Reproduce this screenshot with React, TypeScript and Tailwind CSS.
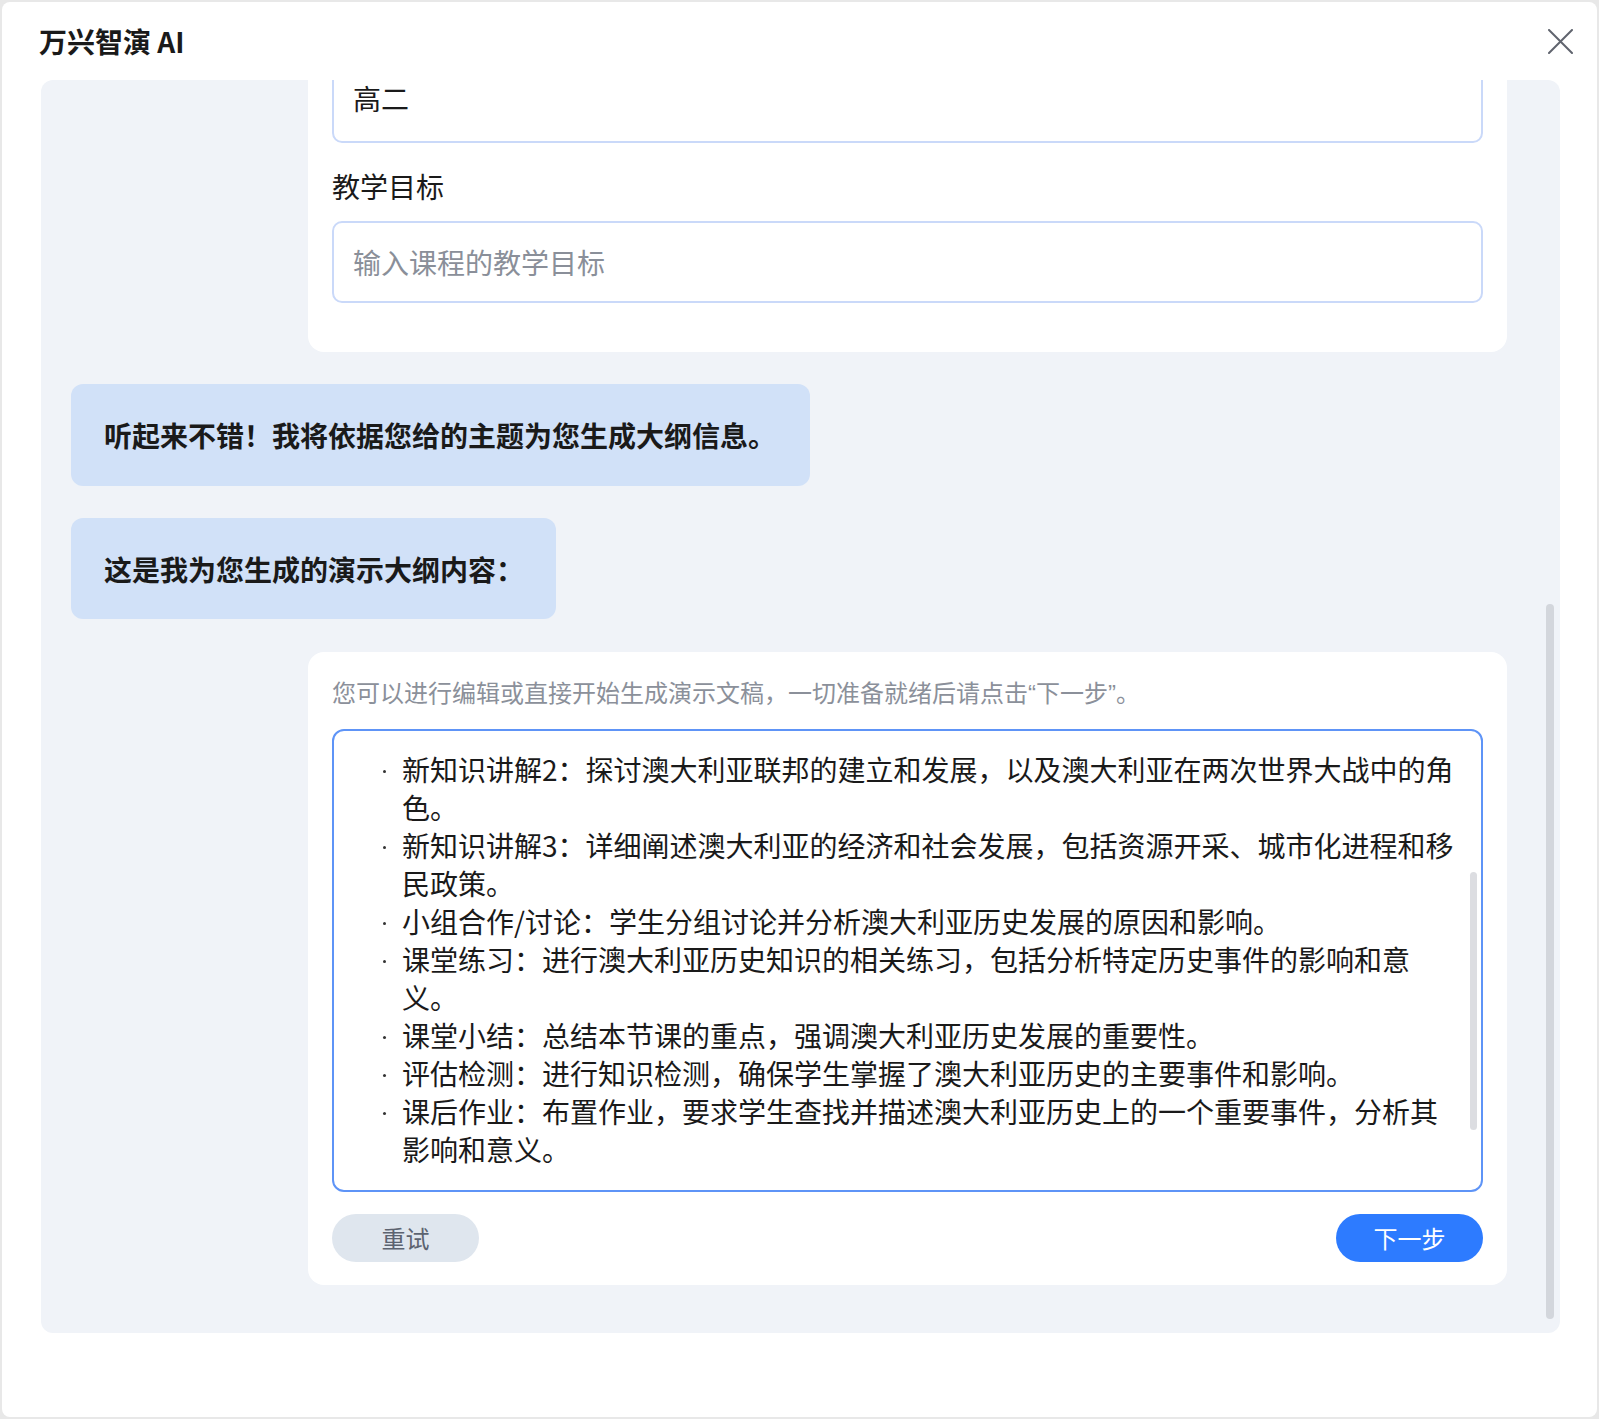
import React from "react";

const items = [
  "新知识讲解2：探讨澳大利亚联邦的建立和发展，以及澳大利亚在两次世界大战中的角色。",
  "新知识讲解3：详细阐述澳大利亚的经济和社会发展，包括资源开采、城市化进程和移民政策。",
  "小组合作/讨论：学生分组讨论并分析澳大利亚历史发展的原因和影响。",
  "课堂练习：进行澳大利亚历史知识的相关练习，包括分析特定历史事件的影响和意义。",
  "课堂小结：总结本节课的重点，强调澳大利亚历史发展的重要性。",
  "评估检测：进行知识检测，确保学生掌握了澳大利亚历史的主要事件和影响。",
  "课后作业：布置作业，要求学生查找并描述澳大利亚历史上的一个重要事件，分析其影响和意义。",
];

export default function App() {
  return (
    <div className="w-[1599px] h-[1419px] bg-[#e8e8e8] p-[2px] font-['Noto_Sans_CJK_SC',sans-serif] text-[#1a1a1a]">
      <div className="w-full h-full bg-white rounded-[8px] flex flex-col overflow-hidden">
        {/* Header */}
        <div className="h-[78px] shrink-0 flex items-center justify-between pl-[37px] pr-[24px]">
          <div className="text-[28px] font-bold leading-[38px] text-[#1a1a1a]">万兴智演 AI</div>
          <svg width="25" height="25" viewBox="0 0 25 25" fill="none">
            <path d="M1 1L24 24M24 1L1 24" stroke="#60646e" strokeWidth="2" strokeLinecap="round" />
          </svg>
        </div>

        {/* Panel */}
        <div className="relative ml-[39px] w-[1519px] h-[1253px] bg-[#f0f3f8] rounded-[12px] overflow-hidden">
          <div className="flex flex-col items-start pl-[30px]">
            {/* Card 1 (scrolled, top cut) */}
            <div className="ml-[237px] -mt-[19px] w-[1199px] bg-white rounded-[16px] px-[24px] pb-[49px]">
              <div className="h-[82px] border-2 border-[#cad9f9] rounded-[10px] flex items-center px-[19px] pb-[9px] text-[28px] leading-[30px] text-[#1a1a1a]">
                高二
              </div>
              <div className="mt-[24px] text-[28px] leading-[38px] text-[#1a1a1a]">教学目标</div>
              <div className="mt-[16px] h-[82px] border-2 border-[#cad9f9] rounded-[10px] flex items-center px-[19px] text-[28px] leading-[38px] text-[#8a8f99]">
                输入课程的教学目标
              </div>
            </div>

            {/* Bubble 1 */}
            <div className="mt-[32px] w-[739px] h-[102px] bg-[#d1e1f8] rounded-[12px] flex items-center px-[33px]">
              <span className="text-[28px] font-bold leading-[38px] text-[#1a1a1a] whitespace-nowrap">
                听起来不错！我将依据您给的主题为您生成大纲信息。
              </span>
            </div>

            {/* Bubble 2 */}
            <div className="mt-[32px] w-[485px] h-[101px] bg-[#d1e1f8] rounded-[12px] flex items-center px-[33px]">
              <span className="text-[28px] font-bold leading-[38px] text-[#1a1a1a] whitespace-nowrap">
                这是我为您生成的演示大纲内容：
              </span>
            </div>

            {/* Card 2 */}
            <div className="ml-[237px] mt-[33px] w-[1199px] bg-white rounded-[16px] px-[24px] pt-[24px] pb-[23px]">
              <div className="h-[32px] text-[24px] leading-[32px] text-[#8b909a] whitespace-nowrap">
                您可以进行编辑或直接开始生成演示文稿，一切准备就绪后请点击
                <span className="font-['Liberation_Sans',sans-serif] leading-[20px]">“</span>下一步
                <span className="font-['Liberation_Sans',sans-serif] leading-[20px]">”</span>。
              </div>
              <div className="relative mt-[21px] h-[463px] border-2 border-[#5e94f7] rounded-[12px] overflow-hidden">
                <div className="pt-[19px] pl-[49px] pr-[23px] flex flex-col">
                  {items.map((t, i) => (
                    <div key={i} className="flex text-[28px] leading-[38px] text-[#1a1a1a]">
                      <div className="w-[19px] h-[38px] shrink-0 flex items-center pt-[5px]">
                        <div className="w-[3px] h-[3px] rounded-full bg-[#333]" />
                      </div>
                      <span className="flex-1">{t}</span>
                    </div>
                  ))}
                </div>
                <div className="absolute right-[4px] top-[141px] w-[7px] h-[258px] rounded-full bg-[#dcdde1]" />
              </div>
              <div className="mt-[22px] flex justify-between">
                <div className="w-[147px] h-[48px] rounded-full bg-[#dfe6ee] flex items-center justify-center text-[24px] leading-[32px] text-[#5c6370]">
                  重试
                </div>
                <div className="w-[147px] h-[48px] rounded-full bg-[#2d7bff] flex items-center justify-center text-[24px] leading-[32px] text-white">
                  下一步
                </div>
              </div>
            </div>
          </div>

          {/* Panel scrollbar */}
          <div className="absolute right-[6px] top-[524px] bottom-[14px] w-[8px] rounded-full bg-[#d3d6dc]" />
        </div>
      </div>
    </div>
  );
}
